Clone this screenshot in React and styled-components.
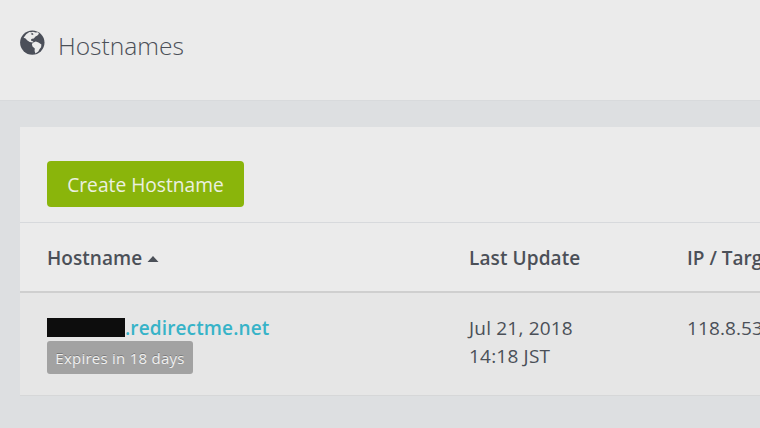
import React from "react";
import styled, { createGlobalStyle } from "styled-components";

const GlobalStyle = createGlobalStyle`
  *, *::before, *::after { box-sizing: border-box; }
  html, body { margin: 0; overflow: hidden; background: #dddfe1; }
  body { font-family: "Open Sans", "Noto Sans", sans-serif; color: #4b5058; }
`;

const Page = styled.div`
  width: 760px;
  height: 428px;
  overflow: hidden;
  background: #dddfe1;
`;

const Header = styled.header`
  display: flex;
  align-items: flex-start;
  gap: 13px;
  height: 101px;
  padding: 30px 20px 0;
  background: #ebebeb;
  border-bottom: 1px solid #d8dadc;
`;

const GlobeIcon = styled.svg`
  display: block;
  width: 25px;
  height: 25px;
`;

const Title = styled.h1`
  margin: 0;
  font-size: 24.6px;
  font-weight: 300;
  line-height: 31px;
`;

const Panel = styled.main`
  width: 1000px;
  height: 269px;
  margin: 26px 0 0 20px;
  background: #ebebeb;
  border-bottom: 1px solid #d6d7d8;
`;

const Toolbar = styled.div`
  height: 95px;
  padding: 34px 27px 0;
`;

const Button = styled.button`
  width: 197px;
  height: 46px;
  padding: 0;
  border: 0;
  border-radius: 4px;
  background: #8ab50b;
  color: #ebf0e0;
  font: 400 19.2px/47px "Open Sans", sans-serif;
`;

const Row = styled.div`
  display: grid;
  grid-template-columns: 422px 218px 333px;
  padding-left: 27px;
  font-size: 19px;
  line-height: 28px;
`;

const HeadRow = styled(Row)`
  height: 71px;
  padding-top: 21px;
  border-top: 1px solid #d7d9dc;
  border-bottom: 2px solid #cfcfcf;
  font-weight: 600;
`;

const BodyRow = styled(Row)`
  height: 102px;
  padding-top: 21px;
  background: #e6e6e6;
`;

const SortLabel = styled.div`
  display: flex;
  gap: 5px;
`;

const SortArrow = styled.svg`
  width: 12px;
  height: 6px;
  margin-top: 12px;
`;

const HostLink = styled.div`
  display: flex;
  height: 27px;
  color: #37b3c8;
  font-weight: 600;
`;

const Redaction = styled.span`
  width: 78px;
  height: 19px;
  margin-top: 4px;
  background: #0d0d0d;
`;

const Badge = styled.span`
  display: block;
  width: 146px;
  height: 33px;
  border-radius: 3px;
  background: #a2a2a2;
  color: #f0f0f0;
  font-size: 15px;
  letter-spacing: 0.25px;
  line-height: 34px;
  text-align: center;
  text-shadow: 0 -1px 0 rgba(0, 0, 0, 0.25);
`;

const Text = styled.span`
  display: block;
  white-space: nowrap;
  letter-spacing: ${(p) => p.$spacing || "normal"};
`;

export default function App() {
  return (
    <>
      <GlobalStyle />
      <Page>
        <Header>
          <GlobeIcon viewBox="0 0 25 25" aria-hidden="true">
            <circle cx="12.3" cy="12.6" r="12.2" fill="#4b4f59" />
            <path
              fill="#ebebeb"
              d="M3.6 7.8 L6.2 4.2 L9.4 2 L11.2 2.3 L13 1.8 L15.6 2.4 L17.8 2.2 L19 3.8 L17.4 5.6 L15.5 6.4 L13.8 8.6 L12 8.8 L11 9.6 L11.2 10.8 L13.4 11.5 L12.6 12.6 L9.7 11.9 L7.1 10.2 L5.6 8.4 Z"
            />
            <path
              fill="#ebebeb"
              d="M12.8 12.7 L15.8 11.6 L18.5 12.4 L21.4 14.5 L21.1 17.2 L19.6 19 L18.3 21.4 L15.4 23.6 L14.6 20.9 L14.8 18.6 L12.5 16.6 L11.9 14.3 Z"
            />
            <path fill="#4b4f59" d="M10.8 3.7 L12.5 3 L13.6 4.2 L12.1 5.1 Z" />
          </GlobeIcon>
          <Title>Hostnames</Title>
        </Header>
        <Panel>
          <Toolbar>
            <Button type="button">Create Hostname</Button>
          </Toolbar>
          <HeadRow>
            <SortLabel>
              <Text $spacing="0.05px">Hostname</Text>
              <SortArrow viewBox="0 0 12 6" aria-hidden="true">
                <path d="M0.5 6 L6 0 L11.5 6 Z" fill="#4b5058" />
              </SortArrow>
            </SortLabel>
            <Text $spacing="0.1px">Last Update</Text>
            <Text>IP / Target</Text>
          </HeadRow>
          <BodyRow>
            <div>
              <HostLink>
                <Redaction />
                <Text $spacing="0.14px">.redirectme.net</Text>
              </HostLink>
              <Badge>Expires in 18 days</Badge>
            </div>
            <div>
              <Text $spacing="0.2px">Jul 21, 2018</Text>
              <Text $spacing="0.2px">14:18 JST</Text>
            </div>
            <Text $spacing="0.1px">118.8.53</Text>
          </BodyRow>
        </Panel>
      </Page>
    </>
  );
}
